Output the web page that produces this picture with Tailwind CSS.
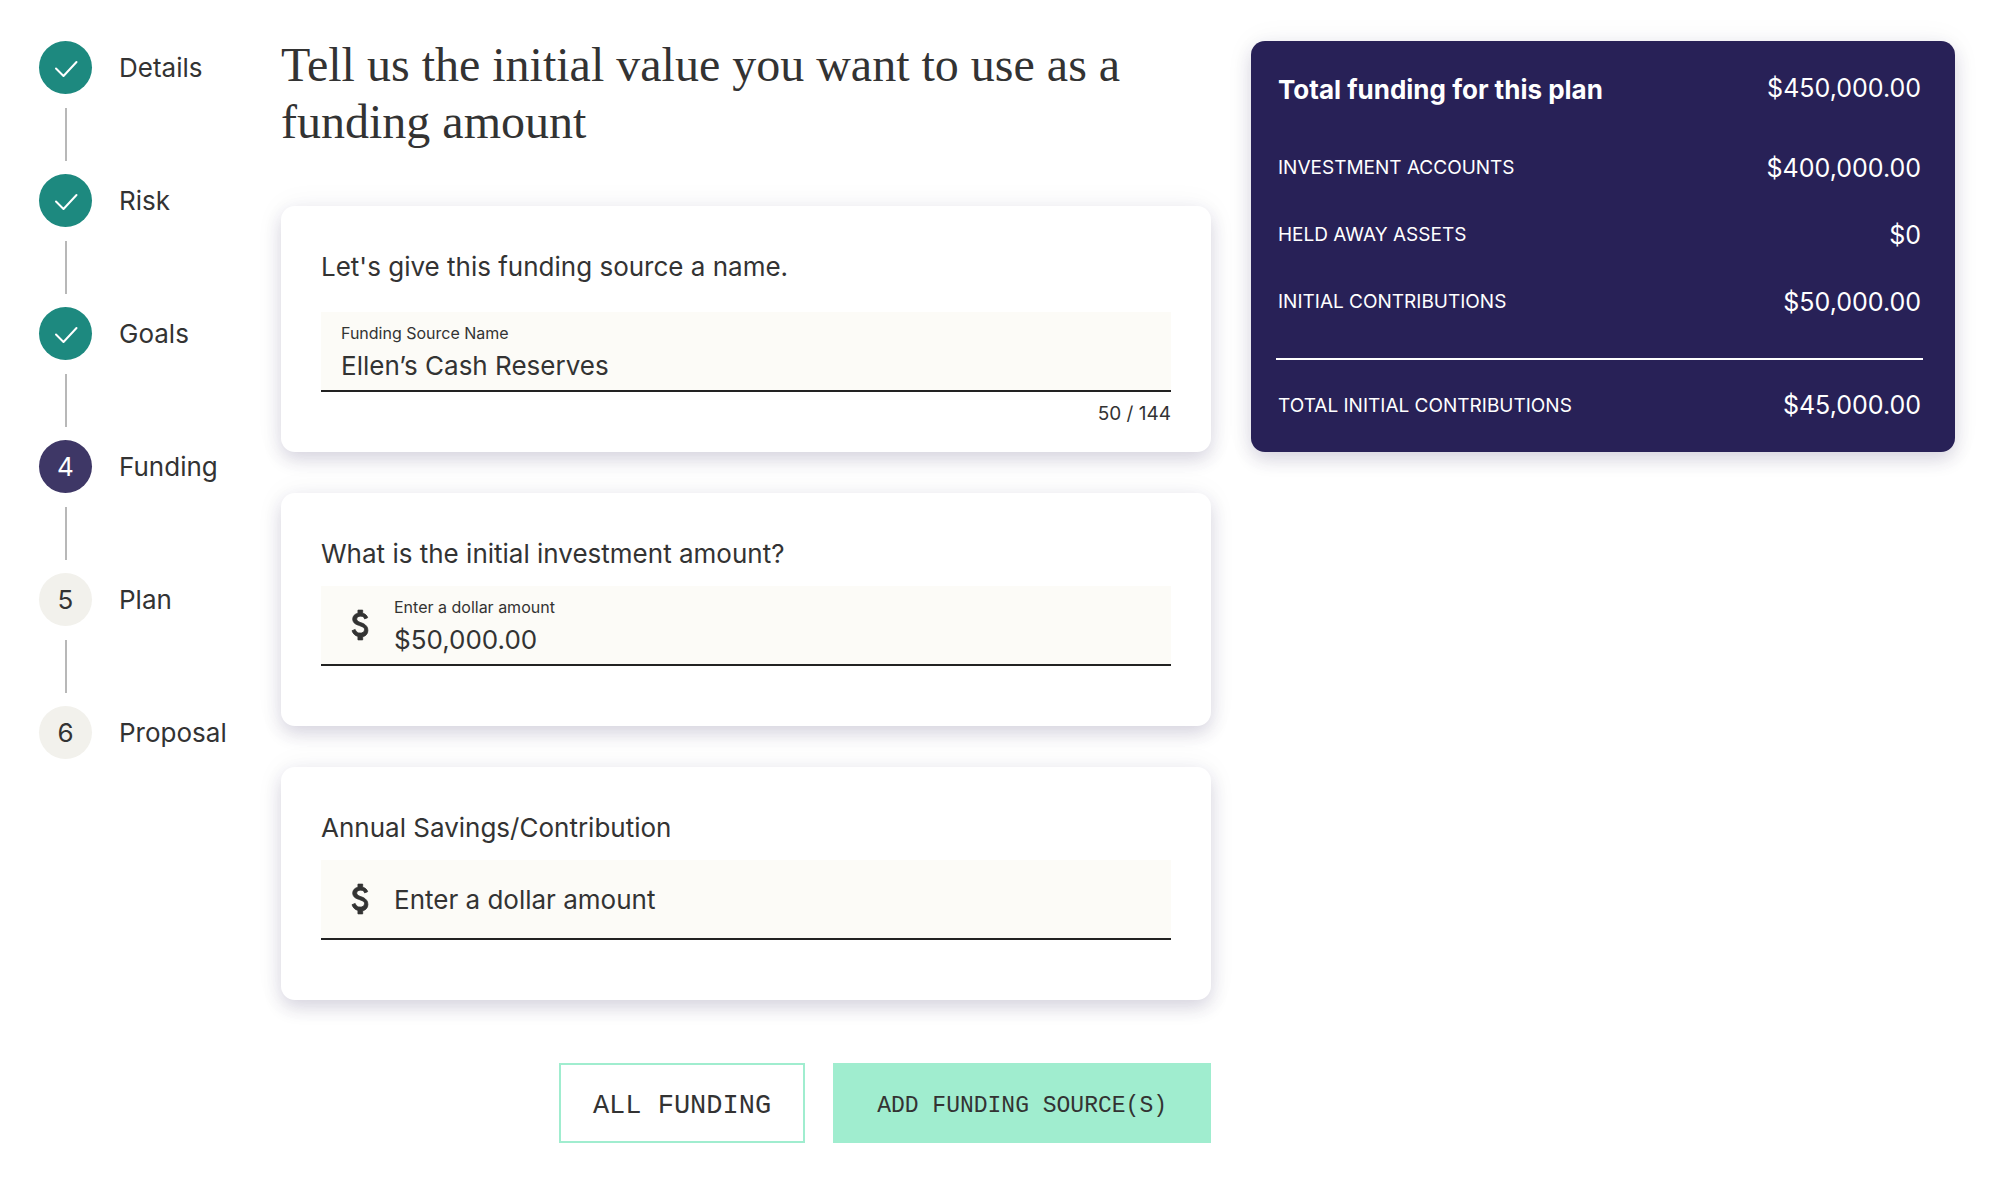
<!DOCTYPE html>
<html lang="en">
	<head>
		<meta charset="UTF-8" />
		<meta name="viewport" content="width=device-width, initial-scale=1.0" />
		<title>Funding</title>
		<script src="https://cdn.jsdelivr.net/npm/@tailwindcss/browser@4"></script>
	</head>
	<body class="bg-white font-['Inter',sans-serif] text-[26px] text-[#333333]">
		<div class="min-h-screen grid grid-cols-[202px_930fr_704fr] items-start gap-10 pl-[39px] pr-[45px] pb-12">
			<!-- Steps -->
			<nav class="pt-[41px]" aria-label="Progress">
				<ol>
					<li>
						<div class="flex items-center gap-[27px]">
							<span class="flex size-[53px] shrink-0 items-center justify-center rounded-full bg-[#1d897f] text-white">
								<svg class="size-6" viewBox="0 0 24 24" fill="none" stroke="currentColor" stroke-width="2" stroke-linecap="round" stroke-linejoin="round"><path d="M2 12.5L9.5 20L22.5 6" /></svg>
							</span>
							<span>Details</span>
						</div>
						<div class="mx-[26px] mt-[14px] mb-[13px] h-[53px] w-[2px] bg-[#b8b8b8]"></div>
					</li>
					<li>
						<div class="flex items-center gap-[27px]">
							<span class="flex size-[53px] shrink-0 items-center justify-center rounded-full bg-[#1d897f] text-white">
								<svg class="size-6" viewBox="0 0 24 24" fill="none" stroke="currentColor" stroke-width="2" stroke-linecap="round" stroke-linejoin="round"><path d="M2 12.5L9.5 20L22.5 6" /></svg>
							</span>
							<span>Risk</span>
						</div>
						<div class="mx-[26px] mt-[14px] mb-[13px] h-[53px] w-[2px] bg-[#b8b8b8]"></div>
					</li>
					<li>
						<div class="flex items-center gap-[27px]">
							<span class="flex size-[53px] shrink-0 items-center justify-center rounded-full bg-[#1d897f] text-white">
								<svg class="size-6" viewBox="0 0 24 24" fill="none" stroke="currentColor" stroke-width="2" stroke-linecap="round" stroke-linejoin="round"><path d="M2 12.5L9.5 20L22.5 6" /></svg>
							</span>
							<span>Goals</span>
						</div>
						<div class="mx-[26px] mt-[14px] mb-[13px] h-[53px] w-[2px] bg-[#b8b8b8]"></div>
					</li>
					<li aria-current="step">
						<div class="flex items-center gap-[27px]">
							<span class="flex size-[53px] shrink-0 items-center justify-center rounded-full bg-[#3e3766] text-white">4</span>
							<span>Funding</span>
						</div>
						<div class="mx-[26px] mt-[14px] mb-[13px] h-[53px] w-[2px] bg-[#b8b8b8]"></div>
					</li>
					<li>
						<div class="flex items-center gap-[27px]">
							<span class="flex size-[53px] shrink-0 items-center justify-center rounded-full bg-[#f2f1ec]">5</span>
							<span>Plan</span>
						</div>
						<div class="mx-[26px] mt-[14px] mb-[13px] h-[53px] w-[2px] bg-[#b8b8b8]"></div>
					</li>
					<li>
						<div class="flex items-center gap-[27px]">
							<span class="flex size-[53px] shrink-0 items-center justify-center rounded-full bg-[#f2f1ec]">6</span>
							<span>Proposal</span>
						</div>
					</li>
				</ol>
			</nav>

			<!-- Form -->
			<main class="pt-9">
				<h1 class="font-['Liberation_Serif',serif] text-[48px] leading-[57px]">Tell us the initial value you want to use as a funding amount</h1>
				<form class="mt-14">
					<div class="flex flex-col gap-[41px]">
						<section class="rounded-[14px] bg-white px-10 pt-10 shadow-[0_8px_18px_rgba(41,33,87,0.16),0_0_30px_rgba(41,33,87,0.05)]">
							<p id="name-question" class="mb-6 leading-[42px]">Let's give this funding source a name.</p>
							<div class="flex h-20 flex-col justify-center border-b-2 border-[#222222] bg-[#fcfbf7] px-5 pt-1">
								<label for="source-name" class="text-[16px] leading-6">Funding Source Name</label>
								<input id="source-name" type="text" value="Ellen’s Cash Reserves" aria-describedby="name-question" class="h-10 w-full bg-transparent outline-none" />
							</div>
							<div class="h-[60px] pt-2 text-right text-[19px] leading-7">50 / 144</div>
						</section>

						<section class="rounded-[14px] bg-white px-10 pt-10 shadow-[0_8px_18px_rgba(41,33,87,0.16),0_0_30px_rgba(41,33,87,0.05)]">
							<p id="amount-question" class="mb-[11px] leading-[42px]">What is the initial investment amount?</p>
							<div class="flex h-20 items-center gap-[15px] border-b-2 border-[#222222] bg-[#fcfbf7] px-5">
								<svg class="size-[38px] shrink-0" viewBox="0.8 0 24 24" fill="currentColor" stroke="currentColor" stroke-width="0.5"><path d="M14.89 11.1c-1.87-.77-4.18-1.27-4.18-2.85 0-1.3 1.3-1.85 2.55-1.85 1.44 0 2.18.7 2.45 1.75l1.95-.8C17.2 6 16.2 5 14.5 4.65V2.6h-3v2c-2 .4-3.3 1.75-3.3 3.6 0 2.9 2.7 3.65 4.45 4.25 2.3.8 3 1.35 3 2.5 0 1.45-1.4 2.15-2.75 2.15-1.6 0-2.65-.8-3.15-2.3l-2 .8c.6 1.95 1.95 3.1 3.75 3.6v2.2h3v-2.05c1.9-.35 3.3-1.75 3.3-3.95 0-2.15-1.25-3.4-2.91-4.3z" /></svg>
								<div class="flex flex-1 flex-col pt-1">
									<label for="initial-amount" class="text-[16px] leading-6">Enter a dollar amount</label>
									<input id="initial-amount" type="text" value="$50,000.00" aria-describedby="amount-question" class="h-10 w-full bg-transparent outline-none" />
								</div>
							</div>
							<div class="h-[60px]"></div>
						</section>

						<section class="rounded-[14px] bg-white px-10 pt-10 shadow-[0_8px_18px_rgba(41,33,87,0.16),0_0_30px_rgba(41,33,87,0.05)]">
							<label for="annual-amount" class="mb-[11px] block leading-[42px]">Annual Savings/Contribution</label>
							<div class="flex h-20 items-center gap-[15px] border-b-2 border-[#222222] bg-[#fcfbf7] px-5">
								<svg class="size-[38px] shrink-0" viewBox="0.8 0 24 24" fill="currentColor" stroke="currentColor" stroke-width="0.5"><path d="M14.89 11.1c-1.87-.77-4.18-1.27-4.18-2.85 0-1.3 1.3-1.85 2.55-1.85 1.44 0 2.18.7 2.45 1.75l1.95-.8C17.2 6 16.2 5 14.5 4.65V2.6h-3v2c-2 .4-3.3 1.75-3.3 3.6 0 2.9 2.7 3.65 4.45 4.25 2.3.8 3 1.35 3 2.5 0 1.45-1.4 2.15-2.75 2.15-1.6 0-2.65-.8-3.15-2.3l-2 .8c.6 1.95 1.95 3.1 3.75 3.6v2.2h3v-2.05c1.9-.35 3.3-1.75 3.3-3.95 0-2.15-1.25-3.4-2.91-4.3z" /></svg>
								<input id="annual-amount" type="text" placeholder="Enter a dollar amount" class="h-full flex-1 bg-transparent outline-none placeholder:text-[#333333]" />
							</div>
							<div class="h-[60px]"></div>
						</section>
					</div>

					<div class="mt-[63px] flex justify-end gap-7 font-['Liberation_Mono',monospace]">
						<button type="button" class="h-20 border-2 border-[#a0edcf] bg-white px-8 pt-1.5 text-[27px]">ALL FUNDING</button>
						<button type="submit" class="h-20 bg-[#a0edcf] px-11 pt-1.5 text-[23px]">ADD FUNDING SOURCE(S)</button>
					</div>
				</form>
			</main>

			<!-- Summary -->
			<aside class="pt-[41px]">
				<dl class="rounded-[14px] bg-[#282157] pt-[22px] pr-8 pl-[25px] text-[25px] text-white shadow-[0_8px_18px_rgba(41,33,87,0.16),0_0_30px_rgba(41,33,87,0.05)]">
					<div class="mb-5 flex h-[52px] items-center justify-between px-[2px]">
						<dt class="text-[26px] font-bold">Total funding for this plan</dt>
						<dd>$450,000.00</dd>
					</div>
					<div class="flex h-[67px] items-center justify-between px-[2px]">
						<dt class="text-[19px]">INVESTMENT ACCOUNTS</dt>
						<dd>$400,000.00</dd>
					</div>
					<div class="flex h-[67px] items-center justify-between px-[2px]">
						<dt class="text-[19px]">HELD AWAY ASSETS</dt>
						<dd>$0</dd>
					</div>
					<div class="flex h-[67px] items-center justify-between px-[2px]">
						<dt class="text-[19px]">INITIAL CONTRIBUTIONS</dt>
						<dd>$50,000.00</dd>
					</div>
					<div class="mt-[22px] flex h-[94px] items-center justify-between border-t-2 border-white px-[2px]">
						<dt class="text-[19px]">TOTAL INITIAL CONTRIBUTIONS</dt>
						<dd>$45,000.00</dd>
					</div>
				</dl>
			</aside>
		</div>
	</body>
</html>
